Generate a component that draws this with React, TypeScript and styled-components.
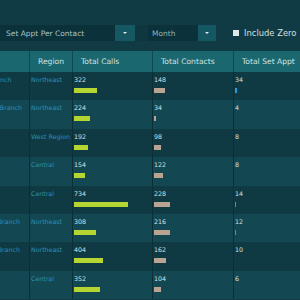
import styled, { createGlobalStyle } from "styled-components";

const GlobalStyle = createGlobalStyle`
  html, body {
    margin: 0;
    padding: 0;
    background: #103b45;
  }
`;

// px per unit, shared by every bar column
const BAR_SCALE = 0.0735;

interface BranchRow {
  branch: string;
  region: string;
  calls: number;
  contacts: number;
  setAppt: number;
}

const rows: BranchRow[] = [
  { branch: "Hartford Branch", region: "Northeast", calls: 322, contacts: 148, setAppt: 34 },
  { branch: "Manchester Branch", region: "Northeast", calls: 224, contacts: 34, setAppt: 4 },
  { branch: "Phoenix", region: "West Region", calls: 192, contacts: 98, setAppt: 8 },
  { branch: "Dallas", region: "Central", calls: 154, contacts: 122, setAppt: 8 },
  { branch: "Omaha", region: "Central", calls: 734, contacts: 228, setAppt: 14 },
  { branch: "Providence Branch", region: "Northeast", calls: 308, contacts: 216, setAppt: 12 },
  { branch: "Providence Branch", region: "Northeast", calls: 404, contacts: 162, setAppt: 10 },
  { branch: "Tulsa", region: "Central", calls: 352, contacts: 104, setAppt: 6 },
];

const Page = styled.div`
  width: 300px;
  height: 300px;
  overflow: hidden;
  background: #103b45;
  font-family: "DejaVu Sans", Verdana, sans-serif;
`;

const Toolbar = styled.div`
  display: flex;
  align-items: center;
  height: 16px;
  margin-top: 25px;
  margin-bottom: 10px;
`;

const SelectBox = styled.div<{ $width: number; $dim?: boolean }>`
  width: ${({ $width }) => $width}px;
  height: 16px;
  box-sizing: border-box;
  padding-left: ${({ $dim }) => ($dim ? 4 : 6)}px;
  display: flex;
  align-items: center;
  background: #0b313a;
  color: ${({ $dim }) => ($dim ? "#8fb2b9" : "#a6c4ca")};
  font-size: 7.5px;
  white-space: nowrap;
`;

const ArrowButton = styled.div<{ $width: number }>`
  width: ${({ $width }) => $width}px;
  height: 16px;
  display: flex;
  align-items: center;
  justify-content: center;
  background: #155762;

  &::after {
    content: "";
    border-left: 2px solid transparent;
    border-right: 2px solid transparent;
    border-top: 2px solid #e4eef0;
  }
`;

const Spacer = styled.div`
  width: 13px;
  height: 16px;
  background: #0e3740;
`;

const CheckRow = styled.label`
  display: flex;
  align-items: center;
  margin-left: 17px;
  gap: 5px;
  color: #d2e0e0;
  font-size: 8.4px;
  white-space: nowrap;
`;

const CheckBox = styled.span`
  width: 6px;
  height: 6px;
  background: #dfe6e8;
`;

const TableClip = styled.div`
  overflow: hidden;
`;

const Table = styled.div`
  margin-left: -40px;
  width: 400px;
`;

const Row = styled.div<{ $kind: "head" | "odd" | "even" }>`
  display: grid;
  grid-template-columns: 70px 43px 80px 81px 1fr;
  height: ${({ $kind }) => ($kind === "head" ? "21px" : "28.4px")};
  background: ${({ $kind }) =>
    $kind === "head" ? "#1b6770" : $kind === "odd" ? "#0f3a43" : "#134853"};
`;

const HeadCell = styled.div`
  display: flex;
  align-items: center;
  padding-left: 8px;
  border-right: 1px solid #0f4a53;
  color: #cde2e2;
  font-size: 7.6px;
  white-space: nowrap;
  overflow: hidden;
`;

const Cell = styled.div`
  padding: 3px 0 0 1px;
  border-right: 1px solid #0b2f37;
  font-size: 6.3px;
  line-height: 9px;
  white-space: nowrap;
  overflow: hidden;
`;

const NameText = styled.div`
  color: #2f90b2;
`;

const NumText = styled.div`
  color: #d6e0e0;
`;

const Bar = styled.div<{ $color: string }>`
  height: 5px;
  margin-top: 4px;
  background: ${({ $color }) => $color};
`;

function BarCell({ value, color }: { value: number; color: string }) {
  return (
    <Cell>
      <NumText>{value}</NumText>
      <Bar $color={color} style={{ width: `${Math.round(value * BAR_SCALE - 0.3)}px` }} />
    </Cell>
  );
}

export default function App() {
  return (
    <Page>
      <GlobalStyle />
      <Toolbar>
        <SelectBox $width={115}>Set Appt Per Contact</SelectBox>
        <ArrowButton $width={20} />
        <Spacer />
        <SelectBox $width={50} $dim>
          Month
        </SelectBox>
        <ArrowButton $width={18} />
        <CheckRow>
          <CheckBox />
          Include Zero
        </CheckRow>
      </Toolbar>
      <TableClip>
        <Table>
          <Row $kind="head">
            <HeadCell>Branch</HeadCell>
            <HeadCell>Region</HeadCell>
            <HeadCell>Total Calls</HeadCell>
            <HeadCell>Total Contacts</HeadCell>
            <HeadCell>Total Set Appt</HeadCell>
          </Row>
          {rows.map((r, i) => (
            <Row key={i} $kind={i % 2 === 0 ? "odd" : "even"}>
              <Cell>
                <NameText>{r.branch}</NameText>
              </Cell>
              <Cell>
                <NameText>{r.region}</NameText>
              </Cell>
              <BarCell value={r.calls} color="#b5d532" />
              <BarCell value={r.contacts} color="#b9a392" />
              <BarCell value={r.setAppt} color="#2f9bd3" />
            </Row>
          ))}
        </Table>
      </TableClip>
    </Page>
  );
}
